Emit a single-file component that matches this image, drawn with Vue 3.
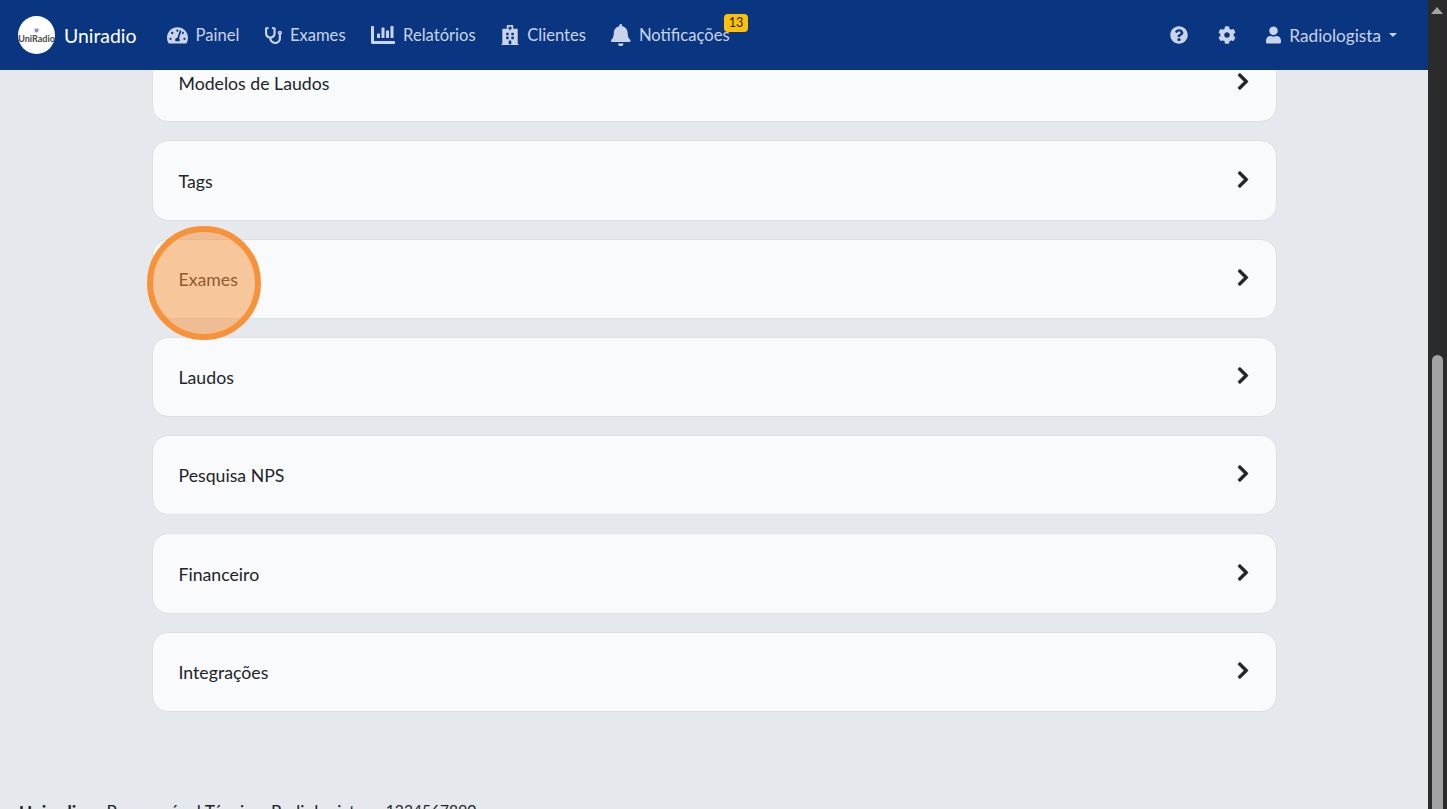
<template>
  <div class="page">
    <div class="column">
      <nav class="navbar">
        <div class="brand">
          <div class="logo">
            <svg class="logo-shield" viewBox="0 0 10 10"><path d="M1 1h8v4c0 2-2 4-4 4S1 7 1 5z" /></svg>
            <span class="logo-text">UniRadio</span>
          </div>
          <span class="brand-name">Uniradio</span>
        </div>
        <ul class="nav-links">
          <li v-for="item in links" :key="item.label" class="nav-item">
            <svg class="nav-icon" :viewBox="item.box" :style="{ width: item.w + 'px' }"><path :d="item.d" /></svg>
            <span>{{ item.label }}</span>
            <span v-if="item.badge" class="badge">{{ item.badge }}</span>
          </li>
        </ul>
        <div class="nav-right">
          <svg class="right-icon" viewBox="0 0 512 512"><path :d="icons.question" /></svg>
          <svg class="right-icon" viewBox="0 0 512 512"><path :d="icons.cog" /></svg>
          <div class="user">
            <svg class="user-icon" viewBox="0 0 448 512"><path :d="icons.user" /></svg>
            <span class="user-name">Radiologista</span>
            <span class="caret"></span>
          </div>
        </div>
      </nav>

      <main class="content">
        <div class="cards">
          <div v-for="card in cards" :key="card" class="card">
            <span>{{ card }}</span>
            <svg class="chevron" viewBox="0 0 320 512"><path :d="icons.chevron" /></svg>
          </div>
        </div>
        <footer class="footer">
          <strong>Uniradio</strong>
          <span class="footer-role">Responsável Técnico: Radiologista</span>
          <span class="footer-phone">1234567890</span>
        </footer>
        <div class="highlight"></div>
      </main>
    </div>

    <div class="scrollbar">
      <span class="arrow"></span>
      <div class="thumb"></div>
    </div>
  </div>
</template>

<script setup>
const icons = {
  chevron: 'M285.476 272.971L91.132 467.314c-9.373 9.373-24.569 9.373-33.941 0l-22.667-22.667c-9.357-9.357-9.375-24.522-.04-33.901L188.505 256 34.484 101.255c-9.335-9.379-9.317-24.544.04-33.901l22.667-22.667c9.373-9.373 24.569-9.373 33.941 0L285.475 239.03c9.373 9.372 9.373 24.568.001 33.941z',
  user: 'M224 256c70.7 0 128-57.3 128-128S294.7 0 224 0 96 57.3 96 128s57.3 128 128 128zm89.6 32h-16.7c-22.2 10.2-46.9 16-72.9 16s-50.6-5.8-72.9-16h-16.7C60.2 288 0 348.2 0 422.4V464c0 26.5 21.5 48 48 48h352c26.5 0 48-21.5 48-48v-41.6c0-74.2-60.2-134.4-134.4-134.4z',
  question: 'M504 256c0 136.997-111.043 248-248 248S8 392.997 8 256C8 119.083 119.043 8 256 8s248 111.083 248 248zM262.655 90c-54.497 0-89.255 22.957-116.549 63.758-3.536 5.286-2.353 12.415 2.715 16.258l34.699 26.31c5.205 3.947 12.621 3.008 16.665-2.122 17.864-22.658 30.113-35.797 57.303-35.797 20.429 0 45.698 13.148 45.698 32.958 0 14.976-12.363 22.667-32.534 33.976C247.128 238.528 216 254.941 216 296v4c0 6.627 5.373 12 12 12h56c6.627 0 12-5.373 12-12v-1.333c0-28.462 83.186-29.647 83.186-106.667 0-58.002-60.165-102-116.531-102zM256 338c-25.365 0-46 20.635-46 46 0 25.364 20.635 46 46 46s46-20.636 46-46c0-25.365-20.635-46-46-46z',
  cog: 'M487.4 315.7l-42.6-24.6c4.3-23.2 4.3-47 0-70.2l42.6-24.6c4.9-2.8 7.1-8.6 5.5-14-11.1-35.6-30-67.8-54.7-94.6-3.8-4.1-10-5.1-14.8-2.3L380.8 110c-17.9-15.4-38.5-27.3-60.8-35.1V25.8c0-5.6-3.9-10.5-9.4-11.7-36.7-8.2-74.3-7.8-109.2 0-5.5 1.2-9.4 6.1-9.4 11.7V75c-22.2 7.9-42.8 19.8-60.8 35.1L88.7 85.5c-4.9-2.8-11-1.9-14.8 2.3-24.7 26.7-43.6 58.9-54.7 94.6-1.7 5.4.6 11.2 5.5 14L67.3 221c-4.3 23.2-4.3 47 0 70.2l-42.6 24.6c-4.9 2.8-7.1 8.6-5.5 14 11.1 35.6 30 67.8 54.7 94.6 3.8 4.1 10 5.1 14.8 2.3l42.6-24.6c17.9 15.4 38.5 27.3 60.8 35.1v49.2c0 5.6 3.9 10.5 9.4 11.7 36.7 8.2 74.3 7.8 109.2 0 5.5-1.2 9.4-6.1 9.4-11.7v-49.2c22.2-7.9 42.8-19.8 60.8-35.1l42.6 24.6c4.9 2.8 11 1.9 14.8-2.3 24.7-26.7 43.6-58.9 54.7-94.6 1.5-5.5-.7-11.3-5.6-14.1zM256 336c-44.1 0-80-35.9-80-80s35.9-80 80-80 80 35.9 80 80-35.9 80-80 80z'
};

const links = [
  { label: 'Painel', box: '0 0 576 512', w: 21, d: 'M288 32C128.94 32 0 160.94 0 320c0 52.8 14.25 102.26 39.06 144.8 5.61 9.62 16.3 15.2 27.44 15.2h443c11.14 0 21.83-5.58 27.44-15.2C561.75 422.26 576 372.8 576 320c0-159.06-128.94-288-288-288zm0 64c14.71 0 26.58 10.13 30.32 23.65-1.11 2.26-2.64 4.23-3.45 6.67l-9.22 27.67c-5.13 3.49-10.97 6.01-17.64 6.01-17.67 0-32-14.33-32-32S270.33 96 288 96zM96 384c-17.67 0-32-14.33-32-32s14.33-32 32-32 32 14.33 32 32-14.33 32-32 32zm48-160c-17.67 0-32-14.33-32-32s14.33-32 32-32 32 14.33 32 32-14.33 32-32 32zm246.77-72.41l-61.33 184C343.13 347.33 352 364.54 352 384c0 11.72-3.38 22.55-8.88 32H232.88c-5.5-9.45-8.88-20.28-8.88-32 0-33.94 26.5-61.43 59.9-63.59l61.34-184.01c4.17-12.56 17.73-19.45 30.36-15.17 12.57 4.19 19.35 17.79 15.17 30.36zm14.66 57.2l15.52-46.55c3.47-1.29 7.13-2.23 11.05-2.23 17.67 0 32 14.33 32 32s-14.33 32-32 32c-11.38-.01-20.89-6.28-26.57-15.22zM480 384c-17.67 0-32-14.33-32-32s14.33-32 32-32 32 14.33 32 32-14.33 32-32 32z' },
  { label: 'Exames', box: '0 0 512 512', w: 17, d: 'M447.1 112c-34.2.5-62.3 28.4-63 62.6-.5 24.3 12.5 45.6 32 56.8V344c0 57.3-50.2 104-112 104-60 0-109.2-44.1-111.9-99.2C265 333.8 320 269.2 320 192V36.6c0-11.4-8.1-21.3-19.3-23.5L237.8.5c-13-2.6-25.6 5.8-28.2 18.8L206.4 35c-2.6 13 5.8 25.6 18.8 28.2l30.7 6.1v121.4c0 52.9-42.2 96.7-95.1 97.2-53.4.5-96.9-42.7-96.9-96V69.4l30.7-6.1c13-2.6 21.4-15.2 18.8-28.2l-3.1-15.7C107.7 6.4 95.1-2 82.1.6L19.3 13C8.1 15.3 0 25.1 0 36.6V192c0 77.3 55.1 142 128.1 156.8C130.7 439.2 208.6 512 304 512c97 0 176-75.4 176-168V231.4c19.1-11.1 32-31.7 32-55.4 0-35.7-29.2-64.5-64.9-64zm.9 80c-8.8 0-16-7.2-16-16s7.2-16 16-16 16 7.2 16 16-7.2 16-16 16z' },
  { label: 'Relatórios', box: '0 0 512 512', w: 24, d: 'M332.8 320h38.4c6.4 0 12.8-6.4 12.8-12.8V172.8c0-6.4-6.4-12.8-12.8-12.8h-38.4c-6.4 0-12.8 6.4-12.8 12.8v134.4c0 6.4 6.4 12.8 12.8 12.8zm96 0h38.4c6.4 0 12.8-6.4 12.8-12.8V76.8c0-6.4-6.4-12.8-12.8-12.8h-38.4c-6.4 0-12.8 6.4-12.8 12.8v230.4c0 6.4 6.4 12.8 12.8 12.8zm-288 0h38.4c6.4 0 12.8-6.4 12.8-12.8v-70.4c0-6.4-6.4-12.8-12.8-12.8h-38.4c-6.4 0-12.8 6.4-12.8 12.8v70.4c0 6.4 6.4 12.8 12.8 12.8zm96 0h38.4c6.4 0 12.8-6.4 12.8-12.8V108.8c0-6.4-6.4-12.8-12.8-12.8h-38.4c-6.4 0-12.8 6.4-12.8 12.8v198.4c0 6.4 6.4 12.8 12.8 12.8zM496 384H64V80c0-8.84-7.16-16-16-16H16C7.16 64 0 71.16 0 80v336c0 17.67 14.33 32 32 32h464c8.84 0 16-7.16 16-16v-32c0-8.84-7.16-16-16-16z' },
  { label: 'Clientes', box: '0 0 448 512', w: 18, d: 'M448 492v20H0v-20c0-6.627 5.373-12 12-12h20V120c0-13.255 10.745-24 24-24h88V24c0-13.255 10.745-24 24-24h112c13.255 0 24 10.745 24 24v72h88c13.255 0 24 10.745 24 24v360h20c6.627 0 12 5.373 12 12zM308 192h-40c-6.627 0-12 5.373-12 12v40c0 6.627 5.373 12 12 12h40c6.627 0 12-5.373 12-12v-40c0-6.627-5.373-12-12-12zm-168 64h40c6.627 0 12-5.373 12-12v-40c0-6.627-5.373-12-12-12h-40c-6.627 0-12 5.373-12 12v40c0 6.627 5.373 12 12 12zm104 128h-40c-6.627 0-12 5.373-12 12v84h64v-84c0-6.627-5.373-12-12-12zm64-96h-40c-6.627 0-12 5.373-12 12v40c0 6.627 5.373 12 12 12h40c6.627 0 12-5.373 12-12v-40c0-6.627-5.373-12-12-12zm-116 12c0-6.627-5.373-12-12-12h-40c-6.627 0-12 5.373-12 12v40c0 6.627 5.373 12 12 12h40c6.627 0 12-5.373 12-12v-40zM182 96h26v26a6 6 0 0 0 6 6h20a6 6 0 0 0 6-6V96h26a6 6 0 0 0 6-6V70a6 6 0 0 0-6-6h-26V38a6 6 0 0 0-6-6h-20a6 6 0 0 0-6 6v26h-26a6 6 0 0 0-6 6v20a6 6 0 0 0 6 6z' },
  { label: 'Notificações', box: '0 0 448 512', w: 19.5, badge: 13, d: 'M224 512c35.32 0 63.97-28.65 63.97-64H160.03c0 35.35 28.65 64 63.97 64zm215.39-149.71c-19.32-20.76-55.47-51.99-55.47-154.29 0-77.7-54.48-139.9-127.94-155.16V32c0-17.67-14.32-32-31.98-32s-31.98 14.33-31.98 32v20.84C118.56 68.1 64.08 130.3 64.08 208c0 102.3-36.15 133.53-55.47 154.29-6 6.45-8.66 14.16-8.61 21.71.11 16.4 12.98 32 32.1 32h383.8c19.12 0 32-15.6 32.1-32 .05-7.55-2.61-15.27-8.61-21.71z' }
];

const cards = ['Modelos de Laudos', 'Tags', 'Exames', 'Laudos', 'Pesquisa NPS', 'Financeiro', 'Integrações'];
</script>

<style>
html, body { margin: 0; overflow: hidden; }
</style>

<style scoped>
.page {
  display: flex;
  height: 100vh;
  overflow: hidden;
  font-family: Lato, "Open Sans", sans-serif;
  font-size: 17.7px;
  background: #e5e8ec;
  color: #212529;
}
.column { flex: 1; min-width: 0; display: flex; flex-direction: column; }

.navbar {
  flex: none;
  height: 70px;
  background: #0a3681;
  display: flex;
  align-items: center;
  padding: 0 31px 0 18px;
  color: #c9d3ea;
  font-size: 16.6px;
  position: relative;
  z-index: 2;
}
.brand { display: flex; align-items: center; gap: 9px; }
.logo {
  width: 37px; height: 38px;
  border-radius: 50%;
  background: #fff;
  display: flex; flex-direction: column; align-items: center; justify-content: center;
  margin-top: -1px;
}
.logo-shield { width: 5px; height: 5px; fill: #8c93c4; margin: 2px 0 1px; }
.logo-text { font-size: 9px; font-weight: 700; color: #4a4a4a; line-height: 9px; }
.brand-name { color: #fff; font-size: 19.4px; }

.nav-links { display: flex; align-items: center; list-style: none; margin: 0 0 0 30px; padding: 0; gap: 25.5px; }
.nav-item { display: flex; align-items: center; gap: 8px; position: relative; }
.nav-icon { height: auto; fill: #c9d3ea; flex: none; }
.badge {
  position: absolute; left: 112.5px; top: -9.5px;
  background: #ffc107; color: #212529;
  font-size: 12.5px; line-height: 18px;
  width: 24px; height: 18px; text-align: center;
  border-radius: 4px;
}

.nav-right { margin-left: auto; display: flex; align-items: center; gap: 30px; }
.right-icon { width: 18px; height: 18px; fill: #c9d3ea; }
.user { display: flex; align-items: center; gap: 8px; }
.user-icon { width: 15px; height: 18px; fill: #c9d3ea; }
.user-name { font-size: 17.2px; }
.caret {
  width: 0; height: 0;
  border-left: 4px solid transparent; border-right: 4px solid transparent;
  border-top: 4px solid #c9d3ea;
}

.content { flex: 1; min-height: 0; position: relative; overflow: hidden; }
.cards { width: 1125px; margin: -27.85px auto 0; display: flex; flex-direction: column; gap: 18.05px; }
.card {
  height: 80.2px;
  box-sizing: border-box;
  background: #f9fafc;
  border: 1px solid #dcdfe3;
  border-radius: 16px;
  display: flex; align-items: center; justify-content: space-between;
  padding: 1.6px 27px 0 26px;
}
.chevron { width: 12px; height: 19px; fill: #212529; stroke: #212529; stroke-width: 16; margin-top: -4px; }

.footer { display: flex; padding: 89px 0 0 19px; white-space: nowrap; gap: 20px; }
.footer-role { font-size: 17.4px; }
.footer-phone { font-size: 15.6px; margin-left: 2px; }

.highlight {
  position: absolute; left: 147px; top: 156px;
  width: 114px; height: 114px;
  box-sizing: border-box;
  border-radius: 50%;
  border: 6px solid #f89239;
  background: rgba(248, 146, 57, 0.5);
}

.scrollbar { flex: none; width: 19px; background: #2b2b2b; position: relative; }
.arrow {
  position: absolute; left: 3px; top: 7px;
  border-left: 6px solid transparent; border-right: 6px solid transparent;
  border-bottom: 7px solid #a3a3a3;
}
.thumb {
  position: absolute; left: 4px; width: 11px; top: 355px; bottom: 0;
  background: #a3a3a3; border-radius: 6px 6px 0 0;
}
</style>
